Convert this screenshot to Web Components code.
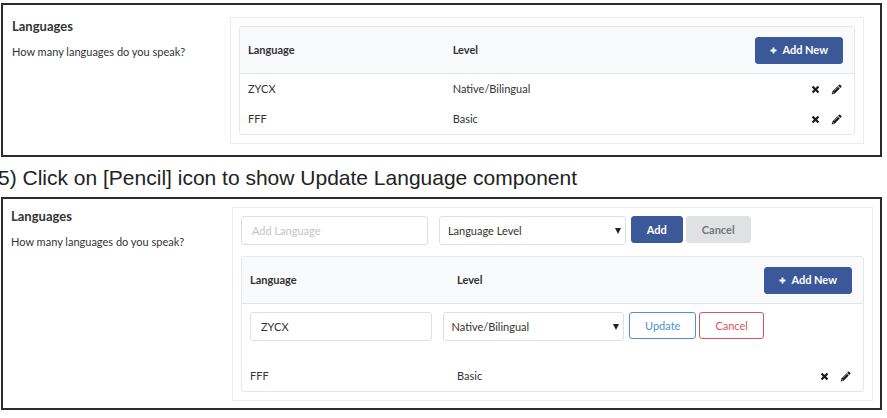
<!DOCTYPE html>
<html lang="en">
<head>
<meta charset="utf-8">
<title>Languages</title>
<style>
  body { margin: 0; padding: 3px 5px 8px 1px; background: #fff; color: #333; font: 11px/18px Lato, "Liberation Sans", sans-serif; overflow-x: hidden; }
</style>
</head>
<body>
<language-guide></language-guide>

<script>
const ICONS = {
  plus: '<svg viewBox="0 0 14 14" width="7" height="7" aria-hidden="true"><path fill="currentColor" d="M5.200 1h3.600v4.200H13v3.600H8.800V13H5.200V8.800H1V5.200h4.200z"/></svg>',
  remove: '<svg viewBox="0 0 14 14" width="9" height="9" aria-hidden="true"><path fill="currentColor" d="M3.600 1.200 7 4.500l3.400-3.300 2.400 2.400L9.500 7l3.300 3.400-2.400 2.400L7 9.500l-3.400 3.300-2.400-2.400L4.500 7 1.200 3.600z"/></svg>',
  pencil: '<svg viewBox="0 0 14 14" width="11" height="11" aria-hidden="true"><path fill="currentColor" d="M10.300.900Q11 .300 11.700.900l1.500 1.500q.600.700 0 1.400l-1.300 1.300-2.900-2.900zM8.300 2.900l2.900 2.900-6.600 6.600L.800 13.300l.900-3.800z"/><path fill="#fff" d="M2.400 10.200l1.500 1.500-.9.400-1-1z"/><path stroke="#fff" stroke-width=".6" d="M3.900 8.700 8.600 4"/></svg>',
  caret: '<svg viewBox="0 0 6 6" width="6" height="6" aria-hidden="true"><path fill="#222" d="M0 0h6L3 6z"/></svg>'
};

class ActionButton extends HTMLElement {
  connectedCallback() {
    const icon = ICONS[this.getAttribute('icon')] || '';
    this.attachShadow({ mode: 'open' }).innerHTML = `
      <style>
        :host { display: inline-block; flex: none; }
        button { display: flex; align-items: center; justify-content: center; gap: 5px; height: 27px; padding: 0 15px;
          border: 1px solid #3b5998; border-radius: 3px; background: #3b5998; color: #fff;
          font: bold 11px/18px Lato, "Liberation Sans", sans-serif; cursor: pointer; white-space: nowrap; }
        :host([icon]) button { padding: 0 14px; }
        :host([kind="muted"]) button { background: #e0e1e2; border-color: #e0e1e2; color: #767778; }
        :host([kind="info"]) button { background: #fff; border-color: #4b93cf; color: #4b93cf; font-weight: normal; }
        :host([kind="danger"]) button { background: #fff; border-color: #d9545a; color: #d9545a; font-weight: normal; }
      </style>
      <button type="button">${icon}<slot></slot></button>`;
  }
}
customElements.define('action-button', ActionButton);

class IconButton extends HTMLElement {
  connectedCallback() {
    this.attachShadow({ mode: 'open' }).innerHTML = `
      <style>
        :host { display: inline-flex; align-items: center; }
        button { display: flex; padding: 0; border: 0; background: none; color: #1b1c1d; cursor: pointer; }
      </style>
      <button type="button" aria-label="${this.getAttribute('label')}">${ICONS[this.getAttribute('icon')]}</button>`;
  }
}
customElements.define('icon-button', IconButton);

class LanguageForm extends HTMLElement {
  connectedCallback() {
    this.attachShadow({ mode: 'open' }).innerHTML = `
      <style>
        :host { display: flex; align-items: flex-start; }
        input, select { box-sizing: border-box; width: 100%; height: 29px; margin: 0; border: 1px solid #dedfe0; border-radius: 3px;
          background: #fff; color: #333; font: 11px/18px Lato, "Liberation Sans", sans-serif; appearance: none; }
        input { padding: 0 10px; }
        input::placeholder { color: #c4c4c4; opacity: 1; }
        select { padding: 0 8px; }
        .text, .choice { flex: 0 0 30%; display: grid; }
        .choice { margin: 0 5px 0 11px; align-items: center; }
        .choice > * { grid-area: 1 / 1; }
        .choice svg { justify-self: end; margin-right: 5px; pointer-events: none; z-index: 1; }
        .buttons { display: flex; gap: 3px; }
      </style>
      <div class="text"><input type="text" aria-label="Language" placeholder="Add Language" value="${this.getAttribute('language') || ''}"></div>
      <div class="choice"><select aria-label="Language level"><option>${this.getAttribute('level')}</option></select>${ICONS.caret}</div>
      <div class="buttons"><slot></slot></div>`;
  }
}
customElements.define('language-form', LanguageForm);

class LanguageTable extends HTMLElement {
  connectedCallback() {
    const rows = [['ZYCX', 'Native/Bilingual'], ['FFF', 'Basic']];
    const editing = this.getAttribute('editing');
    const body = rows.map(([language, level]) => language === editing
      ? `<tr class="edit"><td colspan="3"><language-form language="${language}" level="${level}">
           <action-button kind="info">Update</action-button><action-button kind="danger">Cancel</action-button>
         </language-form></td></tr>`
      : `<tr><td>${language}</td><td>${level}</td><td class="end"><div class="icons">
           <icon-button icon="remove" label="Remove ${language}"></icon-button>
           <icon-button icon="pencil" label="Edit ${language}"></icon-button></div></td></tr>`).join('');
    this.attachShadow({ mode: 'open' }).innerHTML = `
      <style>
        :host { display: block; border: 1px solid #e6e7e8; border-radius: 3px; overflow: hidden; }
        table { width: 100%; table-layout: fixed; border-collapse: separate; border-spacing: 0; }
        th { height: 46px; padding: 0 8px; background: #f9fafb; border-bottom: 1px solid #e2e4e5; text-align: left; font-weight: bold; }
        td { height: 30px; padding: 0 8px; }
        th.end { padding-right: 11px; text-align: right; }
        th action-button { vertical-align: middle; }
        td.end { padding-right: 12px; }
        .icons { display: flex; justify-content: flex-end; gap: 11px; }
        .edit td { height: 49px; padding-top: 8px; vertical-align: top; }
      </style>
      <table>
        <thead><tr><th scope="col">Language</th><th scope="col">Level</th><th class="end" scope="col"><action-button icon="plus">Add New</action-button></th></tr></thead>
        <tbody>${body}</tbody>
      </table>`;
  }
}
customElements.define('language-table', LanguageTable);

class LanguagePanel extends HTMLElement {
  connectedCallback() {
    this.attachShadow({ mode: 'open' }).innerHTML = `
      <style>
        :host { display: flex; border: 2px solid #2b2b2d; }
        header { flex: 0 0 var(--side, 227px); box-sizing: border-box; padding: var(--heading, 12px 0 0 9px); }
        h2 { margin: 0 0 8px; font-size: 13px; line-height: 18px; }
        p { margin: 0; }
        section { flex: 1; min-width: 0; display: flex; flex-direction: column; gap: 11px; border: 1px solid #ececed; margin: var(--frame, 12px 16px 11px 0); padding: 8px; }
      </style>
      <header><h2>Languages</h2><p>How many languages do you speak?</p></header>
      <section><slot></slot></section>`;
  }
}
customElements.define('language-panel', LanguagePanel);

class LanguageGuide extends HTMLElement {
  connectedCallback() {
    this.attachShadow({ mode: 'open' }).innerHTML = `
      <style>
        :host { display: block; }
        .caption { margin: 0 0 0 -3px; padding: 9px 0 7px; color: #222; font: 21px/24px "Liberation Sans", Arial, sans-serif; white-space: nowrap; }
        .update { --side: 229px; --heading: 8px 0 0 8px; --frame: 8px 7px 7px 0; }
      </style>
      <language-panel><language-table></language-table></language-panel>
      <p class="caption">5) Click on [Pencil] icon to show Update Language component</p>
      <language-panel class="update">
        <language-form level="Language Level">
          <action-button>Add</action-button><action-button kind="muted">Cancel</action-button>
        </language-form>
        <language-table editing="ZYCX"></language-table>
      </language-panel>`;
  }
}
customElements.define('language-guide', LanguageGuide);
</script>
</body>
</html>
